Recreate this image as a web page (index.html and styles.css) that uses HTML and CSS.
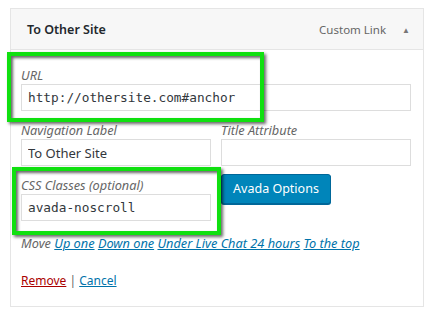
FILE: index.html
```html
<!DOCTYPE html>
<html lang="en">
<head>
    <meta charset="UTF-8" />
    <title>Menu item</title>
    <link rel="stylesheet" href="styles.css">
</head>
<body>
<div class="menu-item">
    <div class="item-bar">
        <span class="item-title">To Other Site</span>
        <span class="item-type">Custom Link</span>
        <span class="item-toggle">&#9650;</span>
    </div>

    <div class="item-settings">
        <label class="field-label">URL</label>
        <input class="field-input mono" type="text" value="http://othersite.com#anchor">

        <div class="row">
            <div class="col">
                <label class="field-label">Navigation Label</label>
                <input class="field-input" type="text" value="To Other Site">
            </div>
            <div class="col">
                <label class="field-label">Title Attribute</label>
                <input class="field-input" type="text" value="">
            </div>
        </div>

        <div class="row">
            <div class="col">
                <label class="field-label">CSS Classes (optional)</label>
                <input class="field-input mono" type="text" value="avada-noscroll">
            </div>
            <div class="col">
                <button class="avada-btn">Avada Options</button>
            </div>
        </div>

        <p class="move-line">Move <a href="#">Up one</a> <a href="#">Down one</a> <a href="#">Under Live Chat 24 hours</a> <a href="#">To the top</a></p>

        <p class="actions"><a class="remove" href="#">Remove</a> | <a href="#">Cancel</a></p>
    </div>
</div>

<!-- cadres verts d'annotation -->
<div class="highlight hl-url"></div>
<div class="highlight hl-css"></div>
</body>
</html>
```

FILE: styles.css
```css
* {
    box-sizing: border-box;
    margin: 0;
    padding: 0;
}

body {
    font-family: 'Noto Sans', 'Open Sans', sans-serif;
    background: #fff;
    color: #23282d;
    position: relative;
    width: 436px;
    height: 326px;
    overflow: hidden;
}

/* Boîte de l'élément de menu */
.menu-item {
    margin: 8px 0 0 10px;
    width: 414px;
    border: 1px solid #e5e5e5;
    background: #fff;
}

.item-bar {
    height: 41px;
    background: #f7f7f7;
    border-bottom: 1px solid #e5e5e5;
    display: flex;
    align-items: center;
    padding: 0 13px 0 16px;
}

.item-title {
    font-size: 12.5px;
    font-weight: 600;
    color: #23282d;
    flex: 1;
}

.item-type {
    font-size: 11.5px;
    color: #666;
}

.item-toggle {
    font-size: 8px;
    color: #777;
    margin-left: 16px;
}

.item-settings {
    padding: 16px 12px 16px 10px;
}

.field-label {
    display: block;
    font-size: 12.75px;
    font-style: italic;
    color: #666;
    line-height: 18px;
}

.field-input {
    display: block;
    width: 100%;
    height: 27px;
    border: 1px solid #ddd;
    background: #fff;
    padding: 0 6px;
    font-family: 'Noto Sans', sans-serif;
    font-size: 13px;
    color: #32373c;
    outline: none;
}

.mono {
    font-family: 'DejaVu Sans Mono', monospace;
    font-size: 12.75px;
}

.row {
    display: flex;
    gap: 10px;
    margin-top: 10px;
}

.col {
    flex: 1;
}

.avada-btn {
    margin-top: -5px;
    width: 110px;
    height: 30px;
    background: #0085ba;
    border: 1px solid #006799;
    border-radius: 3px;
    box-shadow: 0 1px 0 #006799;
    color: #fff;
    font-family: 'Noto Sans', sans-serif;
    font-size: 12.5px;
}

.move-line {
    margin-top: 13px;
    font-size: 12.75px;
    font-style: italic;
    color: #666;
    line-height: 18px;
}

.move-line a,
.actions a {
    color: #0073aa;
}

.actions {
    margin-top: 20px;
    font-size: 12px;
    color: #666;
    line-height: 18px;
}

.actions a.remove {
    color: #a00;
}

/* Cadres verts posés par-dessus */
.highlight {
    position: absolute;
    border: 4px solid #10e010;
    box-shadow: 2px 2px 3px rgba(0,0,0,0.6), inset 2px 2px 3px rgba(0,0,0,0.6);
}

.hl-url {
    left: 7px;
    top: 52px;
    width: 257px;
    height: 70px;
}

.hl-css {
    left: 12px;
    top: 167px;
    width: 209px;
    height: 68px;
}
```
